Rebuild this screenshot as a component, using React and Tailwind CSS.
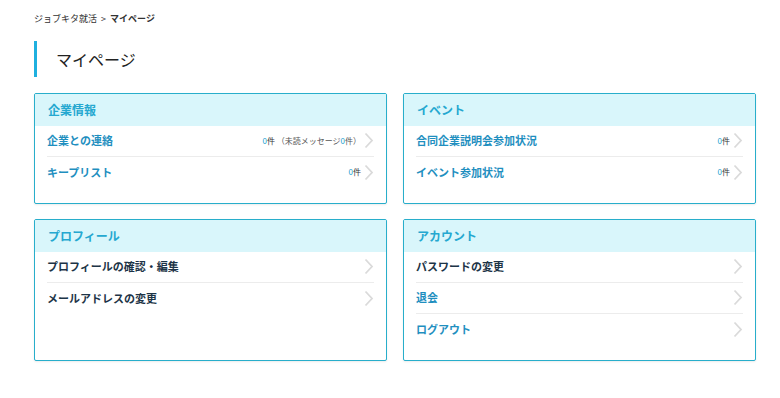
import React from 'react'

const font = { fontFamily: '"Noto Sans CJK JP", "Noto Sans", sans-serif' }

function Chevron() {
  return (
    <svg width="10" height="17" viewBox="0 0 10 17" className="shrink-0">
      <path d="M1.5 1.5 L8 8.5 L1.5 15.5" fill="none" stroke="#dadada" strokeWidth="1.8" />
    </svg>
  )
}

function Count({ n }) {
  return (
    <span className="text-[8px] text-[#333]">
      <span className="text-[#1c9fd0]">{n}</span>件
    </span>
  )
}

function Row({ label, dark, right, last }) {
  return (
    <div className={`flex items-center h-[31px] ${last ? '' : 'border-b border-[#ececec]'}`}>
      <span className={`flex-1 text-[11px] font-bold ${dark ? 'text-[#1d3447]' : 'text-[#1f8fbf]'}`}>{label}</span>
      <div className="flex items-center gap-[3px]">
        {right}
        <Chevron />
      </div>
    </div>
  )
}

function Card({ title, rows }) {
  return (
    <div className="border-[1.5px] border-[#28aecb] rounded-[2px] bg-white overflow-hidden shadow-[0_1px_2px_rgba(0,0,0,0.08)]">
      <div className="h-[32px] bg-[#d9f6fb] flex items-center px-[13px]">
        <span className="text-[12px] font-semibold text-[#25a8d0]">{title}</span>
      </div>
      <div className="px-[12px] pb-[15px]">
        {rows.map((r, i) => (
          <Row key={i} {...r} last={i === rows.length - 1} />
        ))}
      </div>
    </div>
  )
}

export default function App() {
  return (
    <div className="w-[780px] h-[398px] bg-white pl-[34px] pr-[24px] pt-[12px]" style={font}>
      <div className="text-[9px] text-[#333]">
        ジョブキタ就活 <span className="mx-[2px]">&gt;</span> <span className="font-bold">マイページ</span>
      </div>
      <div className="mt-[15px] h-[36px] border-l-[3px] border-[#1fb0df] flex items-center pl-[19px]">
        <h1 className="text-[16px] text-[#222]">マイページ</h1>
      </div>
      <div className="grid grid-cols-2 gap-x-[16px] gap-y-[15px] mt-[16px]">
        <Card
          title="企業情報"
          rows={[
            {
              label: '企業との連絡',
              right: (
                <span className="text-[8px] text-[#555]">
                  <Count n="0" /> （未読メッセージ<span className="text-[#1c9fd0]">0</span>件）
                </span>
              ),
            },
            { label: 'キープリスト', right: <Count n="0" /> },
          ]}
        />
        <Card
          title="イベント"
          rows={[
            { label: '合同企業説明会参加状況', right: <Count n="0" /> },
            { label: 'イベント参加状況', right: <Count n="0" /> },
          ]}
        />
        <Card
          title="プロフィール"
          rows={[
            { label: 'プロフィールの確認・編集', dark: true },
            { label: 'メールアドレスの変更', dark: true },
          ]}
        />
        <Card
          title="アカウント"
          rows={[
            { label: 'パスワードの変更', dark: true },
            { label: '退会' },
            { label: 'ログアウト' },
          ]}
        />
      </div>
    </div>
  )
}
